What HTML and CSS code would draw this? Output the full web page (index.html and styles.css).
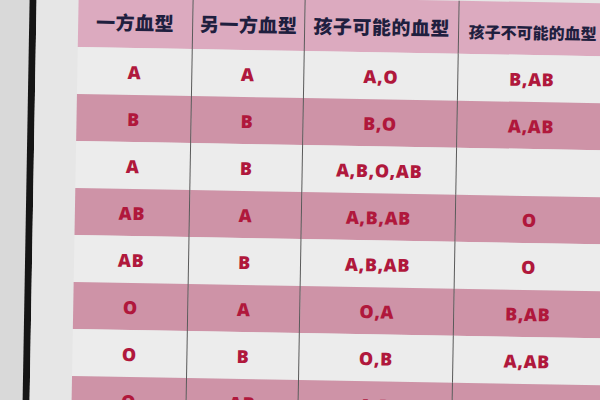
FILE: index.html
```html
<!DOCTYPE html>
<html lang="zh">
<head>
<meta charset="utf-8">
<link rel="stylesheet" href="styles.css">
</head>
<body>
<div class="scene">
  <div class="wall"></div>
  <div class="bar"></div>
  <div class="board">
    <table class="blood">
      <thead>
        <tr><th>一方血型</th><th>另一方血型</th><th>孩子可能的血型</th><th class="small">孩子不可能的血型</th></tr>
      </thead>
      <tbody>
        <tr><td>A</td><td>A</td><td>A,O</td><td>B,AB</td></tr>
        <tr><td>B</td><td>B</td><td>B,O</td><td>A,AB</td></tr>
        <tr><td>A</td><td>B</td><td>A,B,O,AB</td><td></td></tr>
        <tr><td>AB</td><td>A</td><td>A,B,AB</td><td>O</td></tr>
        <tr><td>AB</td><td>B</td><td>A,B,AB</td><td>O</td></tr>
        <tr><td>O</td><td>A</td><td>O,A</td><td>B,AB</td></tr>
        <tr><td>O</td><td>B</td><td>O,B</td><td>A,AB</td></tr>
        <tr><td>O</td><td>AB</td><td>A,B</td><td>O,AB</td></tr>
      </tbody>
    </table>
  </div>
</div>
</body>
</html>
```
FILE: styles.css
```css
html, body {
  margin: 0;
  padding: 0;
  width: 600px;
  height: 400px;
  overflow: hidden;
  background: #e3e3e3;
}
.scene {
  display: flex;
  width: 680px;
  height: 480px;
  margin: -32px 0 0 -20px;
  transform: rotate(1deg);
  transform-origin: 320px 240px;
}
.wall {
  width: 46px;
  flex: none;
  background: #d9d9d9;
}
.bar {
  width: 7px;
  flex: none;
  background: #151515;
}
.board {
  flex: 1;
  background: #e6e6e6;
  padding: 30px 0 0 42px;
}
.blood {
  border-collapse: collapse;
  table-layout: fixed;
  width: 570px;
}
.blood th, .blood td {
  padding: 0;
  text-align: center;
  vertical-align: middle;
  border-left: 1px solid #5a5a5a;
}
.blood th:first-child, .blood td:first-child {
  border-left: none;
}
.blood th:nth-child(1) { width: 114px; }
.blood th:nth-child(2) { width: 111px; }
.blood th:nth-child(3) { width: 153px; }
.blood th:nth-child(4),
.blood td:nth-child(4) {
  padding-right: 42px;
}
.blood th {
  height: 47px;
  background: #dcaabf;
  color: #1f1f3f;
  font-family: "Noto Sans CJK SC", sans-serif;
  font-weight: 900;
  font-size: 19px;
  letter-spacing: 0.5px;
}
.blood th.small {
  font-size: 16px;
  letter-spacing: 0;
  padding-top: 6px;
}
.blood td {
  height: 47px;
  font-family: "Open Sans", sans-serif;
  font-weight: 800;
  font-size: 18px;
  color: #b0183c;
  letter-spacing: 0.6px;
}
.blood tbody tr:nth-child(odd) td {
  background: #ececec;
}
.blood tbody tr:nth-child(even) td {
  background: #ce93a7;
}
```
